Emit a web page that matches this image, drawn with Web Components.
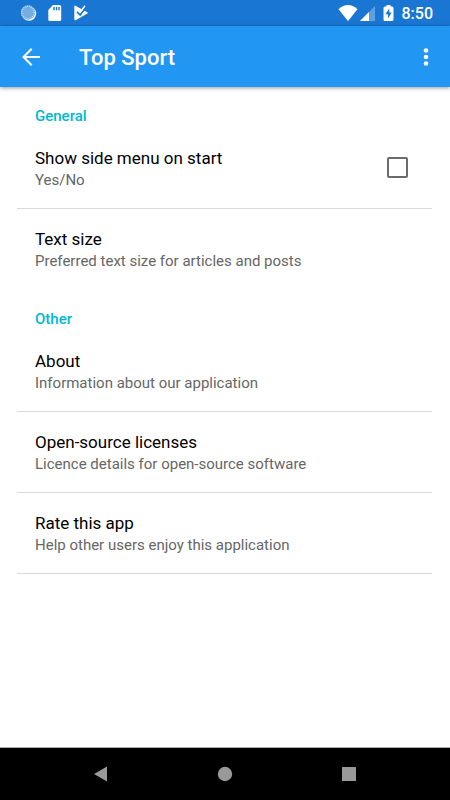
<!DOCTYPE html>
<html lang="en">
<head>
<meta charset="utf-8">
<meta name="viewport" content="width=device-width, initial-scale=1">
<title>Top Sport</title>
<style>
  html, body { margin: 0; }
  body { font-family: Roboto, "Noto Sans", sans-serif; background: #fff; color: #000; }
</style>
</head>
<body>
<settings-screen></settings-screen>
<script>
const define = (name, html) => {
  const template = document.createElement('template');
  template.innerHTML = html;
  customElements.define(name, class extends HTMLElement {
    constructor() {
      super();
      this.attachShadow({ mode: 'open' }).append(template.content.cloneNode(true));
    }
  });
};

define('status-bar', `
<style>
  :host { display: flex; align-items: center; justify-content: space-between; height: 26px; padding: 0 17px 0 20px; background: #1976d2; color: #fff; }
  div { display: flex; align-items: center; }
  .left { gap: 10px; }
  svg { display: block; }
  .wifi { margin-right: 1px; }
  time { margin-left: 5px; font-size: 16px; line-height: 20px; font-weight: 500; padding-top: 2px; }
</style>
<div class="left">
  <svg width="17" height="18" viewBox="0 0 17 18" aria-hidden="true">
    <circle cx="9" cy="9.600" r="7.200" fill="#fff"/>
    <circle cx="8" cy="8.500" r="7.200" fill="#75aee4"/>
    <circle cx="8" cy="8.500" r="6.300" fill="none" stroke="#b9d8f3" stroke-width="1.600" stroke-dasharray="1 1"/>
  </svg>
  <svg width="15" height="18" viewBox="0 0 15 18" aria-hidden="true">
    <path d="M6 1h6.500q1.700 0 1.700 1.500v13q0 1.500-1.700 1.500H3q-1.700 0-1.700-1.500V6z" fill="#fff"/>
    <path d="M7 3v3.200M9.500 3v3.200M12 3v3.200" stroke="#1976d2" stroke-width="1.400"/>
  </svg>
  <svg width="18" height="18" viewBox="0 0 18 18" aria-hidden="true">
    <path d="M2.300 2.500Q2.300 1.300 3.500 1.700L15.300 8.200q1 .7 0 1.400L4 16q-1.700.6-1.700-.8z" fill="#fff"/>
    <path d="M5 7.800l3.200 3.200L14.300 2.800" fill="none" stroke="#1976d2" stroke-width="1.700"/>
    <path d="M9.800 6L13 1.800" fill="none" stroke="#fff" stroke-width="1.600"/>
  </svg>
</div>
<div class="right">
  <svg class="wifi" width="20" height="18" viewBox="0 0 20 18" aria-hidden="true"><path d="M.500 5.200Q10-3 19.500 5.200L10 17z" fill="#fff"/></svg>
  <svg width="18" height="18" viewBox="0 0 18 18" aria-hidden="true"><path d="M1 17L16 2v15z" fill="#5ea0e0"/><path d="M1 17l9-9v9z" fill="#fff"/></svg>
  <svg width="20" height="18" viewBox="0 0 20 18" aria-hidden="true"><path d="M9.500 1h4v1.500h1.500q1.500 0 1.500 1.500v11.500q0 1.500-1.500 1.500H8q-1.500 0-1.500-1.500V4Q6.500 2.500 8 2.500h1.500z" fill="#fff"/><path d="M12.300 4.500L8.300 10.300H11V14.500L14.700 8.500H12.300z" fill="#1976d2"/></svg>
  <time datetime="08:50">8:50</time>
</div>`);

define('app-bar', `
<style>
  :host { display: flex; align-items: center; height: 61px; background: #2196f3; color: #fff; box-shadow: 0 1px 4px rgba(0,0,0,.4); position: relative; }
  h1 { flex: 1; margin: 0; font-size: 22px; line-height: 28px; font-weight: 500; padding-top: 2px; }
  button { display: flex; align-items: center; justify-content: center; width: 48px; height: 48px; padding: 0; border: 0; background: none; color: inherit; cursor: pointer; }
  .back { width: 62px; margin-right: 17px; }
</style>
<button class="back" type="button" aria-label="Back"><svg width="20" height="20" viewBox="0 0 20 20" fill="none" stroke="#fff" stroke-width="2"><path d="M19 10H3M10.700 1.800L2.500 10l8.200 8.200"/></svg></button>
<h1><slot></slot></h1>
<button type="button" aria-label="More options"><svg width="6" height="20" viewBox="0 0 6 20" fill="#fff"><circle cx="3" cy="3.500" r="2.300"/><circle cx="3" cy="10" r="2.300"/><circle cx="3" cy="16.500" r="2.300"/></svg></button>`);

define('settings-group', `
<style>
  :host { display: block; }
  h2 { margin: 0; padding: 19px 18px 2px; font-size: 15px; line-height: 20px; font-weight: 500; color: #00b8d4; }
</style>
<section><h2><slot name="heading"></slot></h2><slot></slot></section>`);

const rowText = `
  .title { display: block; font-size: 17px; line-height: 24px; color: #000; }
  .note { display: block; font-size: 15px; line-height: 21px; color: #666; }`;

define('setting-link', `
<style>
  :host { display: block; border-bottom: 1px solid transparent; }
  :host([divided]) { border-color: #dadada; }
  button { display: block; width: 100%; box-sizing: border-box; padding: 18px 18px 17px; border: 0; background: none; font: inherit; text-align: left; cursor: pointer; }
  ${rowText}
</style>
<button type="button"><span class="title"><slot></slot></span><span class="note"><slot name="note"></slot></span></button>`);

define('setting-check', `
<style>
  :host { display: block; border-bottom: 1px solid #dadada; }
  label { display: flex; align-items: center; justify-content: space-between; padding: 18px 24px 17px 18px; cursor: pointer; }
  input { appearance: none; width: 21px; height: 21px; margin: 0 0 2px; border: 2px solid #6b6b6b; border-radius: 2px; background: #fff; }
  input:checked { background: #00b8d4; border-color: #00b8d4; }
  ${rowText}
</style>
<label><span><span class="title"><slot></slot></span><span class="note"><slot name="note"></slot></span></span><input type="checkbox"></label>`);

define('nav-bar', `
<style>
  :host { display: flex; align-items: center; justify-content: center; height: 52px; background: #000; border-top: 1px solid #aaa; }
  button { display: flex; align-items: center; justify-content: center; flex: 0 1 124px; height: 48px; padding: 0; border: 0; background: none; cursor: pointer; }
  svg { fill: #999; }
</style>
<button type="button" aria-label="Back"><svg width="16" height="16" viewBox="0 0 16 16"><path d="M1 8L14 .5v15z"/></svg></button>
<button type="button" aria-label="Home"><svg width="16" height="16" viewBox="0 0 16 16"><circle cx="8" cy="8" r="7.200"/></svg></button>
<button type="button" aria-label="Recent apps"><svg width="16" height="16" viewBox="0 0 16 16"><rect x="1" y="1" width="14" height="14" rx=".5"/></svg></button>`);

define('settings-screen', `
<style>
  :host { display: flex; flex-direction: column; min-height: 100vh; }
  main { flex: 1; padding: 0 18px 0 17px; }
</style>
<status-bar></status-bar>
<app-bar>Top Sport</app-bar>
<main>
  <settings-group>
    <span slot="heading">General</span>
    <setting-check>Show side menu on start<span slot="note">Yes/No</span></setting-check>
    <setting-link>Text size<span slot="note">Preferred text size for articles and posts</span></setting-link>
  </settings-group>
  <settings-group>
    <span slot="heading">Other</span>
    <setting-link divided>About<span slot="note">Information about our application</span></setting-link>
    <setting-link divided>Open-source licenses<span slot="note">Licence details for open-source software</span></setting-link>
    <setting-link divided>Rate this app<span slot="note">Help other users enjoy this application</span></setting-link>
  </settings-group>
</main>
<nav-bar></nav-bar>`);
</script>
</body>
</html>
